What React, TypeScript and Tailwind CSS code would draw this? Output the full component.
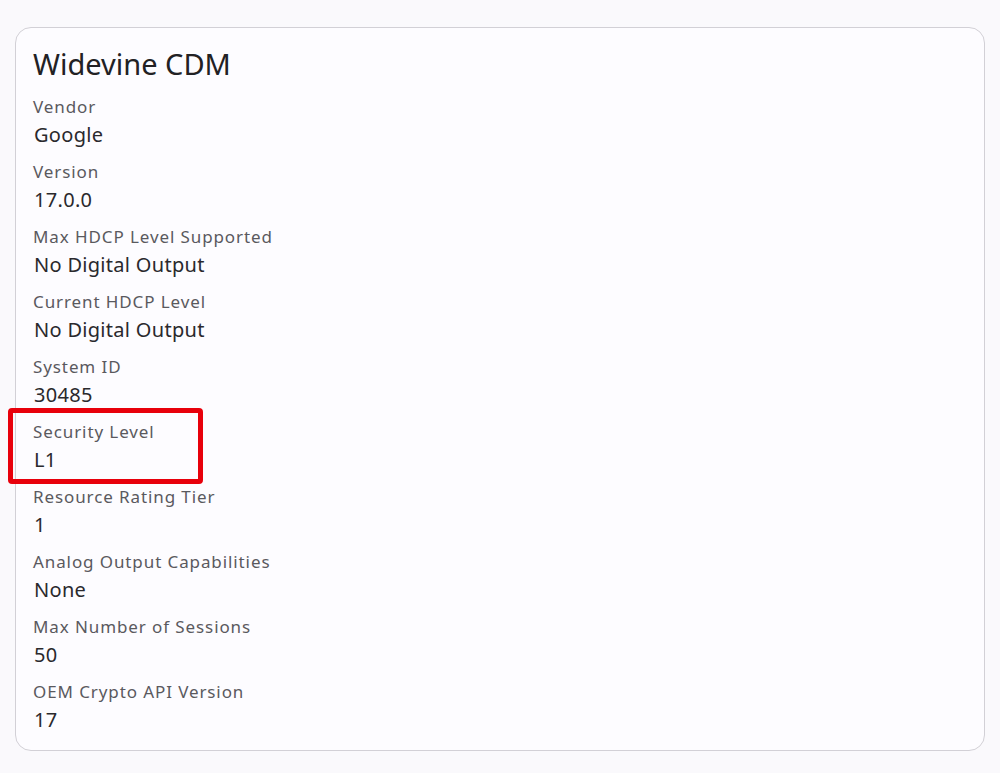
import React from "react";

const items: [string, string][] = [
  ["Vendor", "Google"],
  ["Version", "17.0.0"],
  ["Max HDCP Level Supported", "No Digital Output"],
  ["Current HDCP Level", "No Digital Output"],
  ["System ID", "30485"],
  ["Security Level", "L1"],
  ["Resource Rating Tier", "1"],
  ["Analog Output Capabilities", "None"],
  ["Max Number of Sessions", "50"],
  ["OEM Crypto API Version", "17"],
];

export default function App() {
  return (
    <div
      className="w-[1000px] h-[773px] bg-[#faf9fc] pt-[27px] pl-[15px] overflow-hidden"
      style={{ fontFamily: '"Noto Sans", "Open Sans", sans-serif' }}
    >
      <div className="w-[970px] h-[724px] rounded-[16px] border border-[#d2d0d6] bg-[#fdfcff] pt-[18px] pl-[17px] flex flex-col">
        <div className="text-[29px] leading-[36px] text-[#222124] mb-[14px]">Widevine CDM</div>
        <div className="flex flex-col gap-[12px]">
          {items.map(([label, value]) => (
            <div key={label} className="relative flex flex-col gap-[3px]">
              <div className="text-[17px] leading-[22px] tracking-[0.9px] text-[#5a595e]">{label}</div>
              <div className="text-[20px] leading-[28px] tracking-[0.3px] text-[#2a292d] pl-[1px]">{value}</div>
              {label === "Security Level" && (
                <div className="absolute left-[-25px] top-[-13px] w-[195px] h-[76px] border-[5px] border-[#e8000b] rounded-[4px]" />
              )}
            </div>
          ))}
        </div>
      </div>
    </div>
  );
}
